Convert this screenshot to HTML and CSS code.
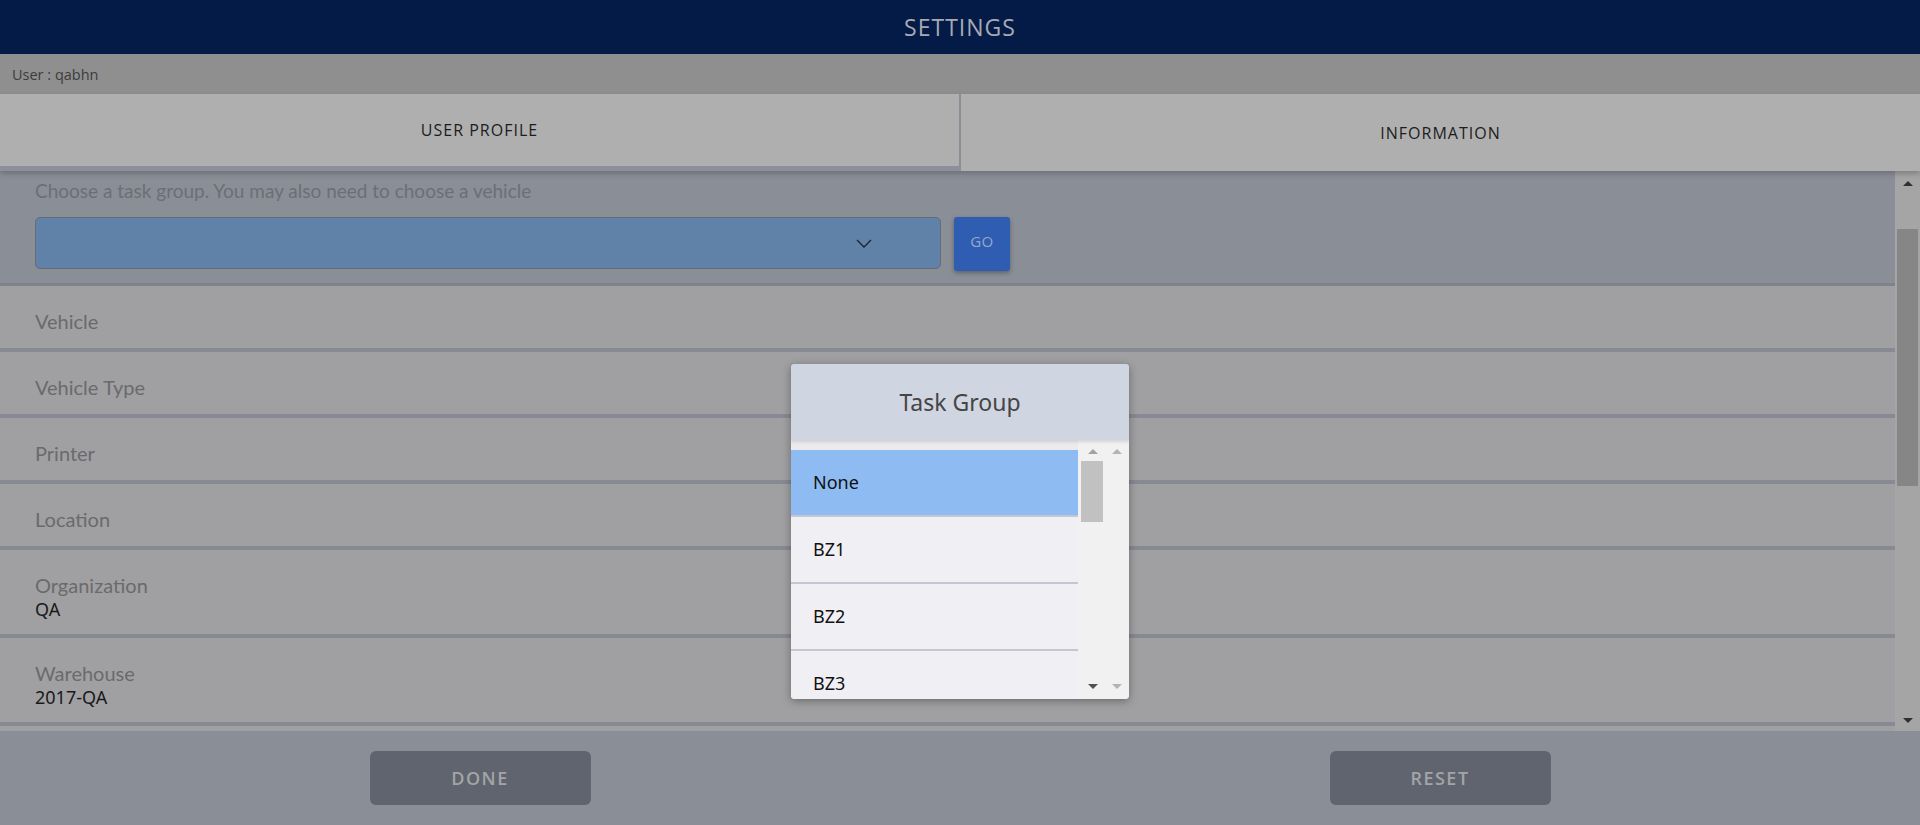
FILE: index.html
```html
<!DOCTYPE html>
<html>
<head>
<meta charset="utf-8">
<title>Settings</title>
<link rel="stylesheet" href="styles.css">
</head>
<body>
<div class="app">
  <header class="topbar"><span class="title">SETTINGS</span></header>
  <div class="userbar">User : qabhn</div>
  <nav class="tabs">
    <div class="tab tab-active">USER PROFILE</div>
    <div class="tab">INFORMATION</div>
  </nav>
  <main class="main">
    <div class="content">
      <section class="chooser">
        <div class="chooser-label">Choose a task group. You may also need to choose a vehicle</div>
        <div class="chooser-row">
          <div class="select">
            <svg class="chevron" width="16" height="9" viewBox="0 0 16 9"><polyline points="1,1 8,8 15,1" fill="none" stroke="#1e2026" stroke-width="1.3"/></svg>
          </div>
          <div class="go">GO</div>
        </div>
      </section>
      <div class="row"><div class="label">Vehicle</div></div>
      <div class="row"><div class="label">Vehicle Type</div></div>
      <div class="row"><div class="label">Printer</div></div>
      <div class="row"><div class="label">Location</div></div>
      <div class="row"><div class="label">Organization</div><div class="value">QA</div></div>
      <div class="row"><div class="label">Warehouse</div><div class="value">2017-QA</div></div>
      <div class="row row-empty"></div>
    </div>
    <div class="vscroll">
      <div class="arrow-up"></div>
      <div class="track"><div class="thumb"></div></div>
      <div class="arrow-down"></div>
    </div>
  </main>
  <footer class="footer">
    <div class="footer-cell"><div class="btn">DONE</div></div>
    <div class="footer-cell"><div class="btn">RESET</div></div>
  </footer>

  <div class="popup">
    <div class="popup-head">Task Group</div>
    <div class="popup-body">
      <ul class="list">
        <li class="item selected">None</li>
        <li class="item">BZ1</li>
        <li class="item">BZ2</li>
        <li class="item">BZ3</li>
      </ul>
      <div class="psb psb1">
        <div class="parrow up mid"></div>
        <div class="ptrack"><div class="pthumb"></div></div>
        <div class="parrow down darkest"></div>
      </div>
      <div class="psb psb2">
        <div class="parrow up light"></div>
        <div class="ptrack"></div>
        <div class="parrow down light"></div>
      </div>
    </div>
  </div>
</div>
</body>
</html>
```

FILE: styles.css
```css
* { box-sizing: border-box; }
html, body { margin: 0; padding: 0; }
body {
  width: 1920px;
  height: 825px;
  overflow: hidden;
  font-family: "Lato", "Noto Sans", sans-serif;
  background: #8a8e96;
}
.app {
  position: relative;
  width: 1920px;
  height: 825px;
  display: flex;
  flex-direction: column;
}
.topbar {
  height: 54px;
  background: #041a47;
  display: flex;
  align-items: center;
  justify-content: center;
}
.title {
  color: #a7aab2;
  font-family: "Open Sans", sans-serif;
  font-size: 23px;
  letter-spacing: 1px;
  padding-bottom: 1px;
}
.userbar {
  height: 40px;
  background: #8f8f8f;
  color: #3c3c3c;
  font-family: "Open Sans", sans-serif;
  font-size: 14.5px;
  display: flex;
  align-items: center;
  padding-left: 12px;
}
.tabs {
  display: flex;
  height: 77px;
  background: #8c9099;
  position: relative;
  z-index: 1;
  box-shadow: 0 3px 5px rgba(60, 64, 72, 0.35);
}
.tab {
  flex: 1;
  background: #afafaf;
  color: #1c1c1c;
  font-family: "Open Sans", sans-serif;
  font-size: 16px;
  letter-spacing: 1px;
  display: flex;
  align-items: center;
  justify-content: center;
}
.tab-active {
  height: 72px;
  border-right: 2px solid #8a8e97;
  padding-bottom: 1px;
}
.main {
  height: 560px;
  display: flex;
  overflow: hidden;
}
.content {
  flex: 1;
  overflow: hidden;
  background: #a0a0a2;
}
.chooser {
  height: 115px;
  background: #8a8e96;
  border-bottom: 3px solid #7e828a;
  padding: 9px 35px 0;
}
.chooser-label {
  color: #6c6f77;
  font-size: 19px;
  line-height: 22px;
}
.chooser-row {
  margin-top: 15px;
  display: flex;
  gap: 13px;
  align-items: flex-start;
}
.select {
  width: 906px;
  height: 52px;
  background: #6182a8;
  border: 1px solid #676b74;
  border-radius: 5px;
  display: flex;
  align-items: center;
  justify-content: flex-end;
  padding-right: 68px;
}
.chevron { display: block; }
.go {
  width: 56px;
  height: 54px;
  background: #2f5db2;
  border-radius: 3px;
  color: #97a8c9;
  font-family: "Open Sans", sans-serif;
  font-size: 15px;
  letter-spacing: 0.5px;
  display: flex;
  align-items: center;
  justify-content: center;
  padding-bottom: 6px;
  box-shadow: 0 2px 4px rgba(40, 44, 52, 0.45);
}
.row {
  min-height: 26px;
  padding: 23px 35px 13px;
  border-bottom: 4px solid #878a93;
  box-sizing: content-box;
}
.label {
  color: #6a6a6c;
  font-size: 20px;
  line-height: 24px;
}
.value {
  color: #19191a;
  font-family: "Noto Sans", sans-serif;
  font-size: 18px;
  line-height: 24px;
}
.vscroll {
  width: 25px;
  background: #a5a5a5;
  display: flex;
  flex-direction: column;
  align-items: center;
  padding: 10px 0 8px;
}
.track {
  flex: 1;
  width: 100%;
  padding: 43px 2px 0 2px;
}
.thumb {
  height: 257px;
  background: #868686;
}
.arrow-up, .arrow-down {
  width: 0;
  height: 0;
  border-left: 5px solid transparent;
  border-right: 5px solid transparent;
}
.arrow-up { border-bottom: 5px solid #2f2f2f; }
.arrow-down { border-top: 5px solid #2f2f2f; }
.footer {
  flex: 1;
  background: #8a8e96;
  display: grid;
  grid-template-columns: 1fr 1fr;
  align-items: center;
}
.footer-cell {
  display: flex;
  justify-content: center;
}
.btn {
  width: 221px;
  height: 54px;
  border-radius: 6px;
  background: #60646e;
  color: #a3a4a7;
  font-family: "Open Sans", sans-serif;
  font-weight: 600;
  font-size: 18px;
  letter-spacing: 1.5px;
  display: flex;
  align-items: center;
  justify-content: center;
}

/* Popup */
.popup {
  position: absolute;
  left: 791px;
  top: 364px;
  width: 338px;
  height: 335px;
  border-radius: 4px;
  overflow: hidden;
  background: #f0f0f0;
  box-shadow: 0 2px 8px rgba(0, 0, 0, 0.35);
  z-index: 5;
  display: flex;
  flex-direction: column;
}
.popup-head {
  height: 76px;
  background: #cfd5e1;
  color: #454545;
  font-family: "Noto Sans", sans-serif;
  font-size: 23px;
  display: flex;
  align-items: center;
  justify-content: center;
  position: relative;
  z-index: 1;
  box-shadow: 0 2px 3px rgba(0, 0, 0, 0.12);
}
.popup-body {
  flex: 1;
  display: flex;
  overflow: hidden;
}
.list {
  list-style: none;
  margin: 0;
  padding: 10px 0 0;
  width: 287px;
  background: #ebebef;
  overflow: hidden;
}
.item {
  height: 67px;
  padding-left: 22px;
  padding-bottom: 2px;
  display: flex;
  align-items: center;
  background: #f0f0f4;
  border-bottom: 2px solid #c4c7d2;
  color: #111;
  font-family: "Noto Sans", sans-serif;
  font-size: 18px;
}
.item.selected { background: #8dbbf2; }
.psb {
  display: flex;
  flex-direction: column;
  align-items: center;
  padding: 9px 0 10px;
  background: #f1f1f1;
}
.psb1 { width: 27px; padding-left: 2px; }
.psb2 { width: 24px; }
.ptrack {
  flex: 1;
  width: 100%;
  padding: 7px 2px 0 1px;
}
.pthumb {
  height: 61px;
  background: #c1c1c1;
}
.parrow {
  width: 0;
  height: 0;
  border-left: 5px solid transparent;
  border-right: 5px solid transparent;
}
.parrow.up.mid { border-bottom: 5px solid #a3a3a3; }
.parrow.up.light { border-bottom: 5px solid #b3b3b3; }
.parrow.down.darkest { border-top: 5px solid #505050; }
.parrow.down.light { border-top: 5px solid #b3b3b3; }
```
